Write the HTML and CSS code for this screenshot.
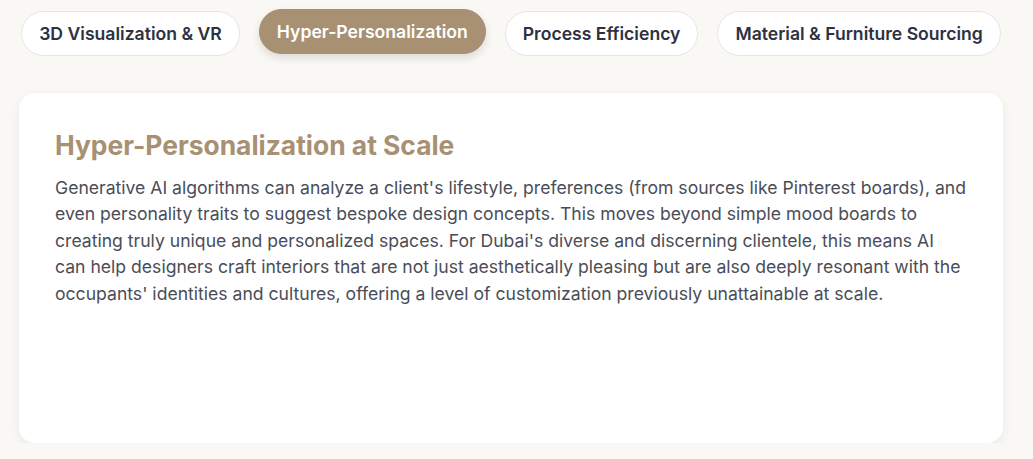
FILE: index.html
```html
<!DOCTYPE html>
<html lang="en">
<head>
  <meta charset="UTF-8">
  <meta name="viewport" content="width=device-width, initial-scale=1.0">
  <title>AI in Interior Design</title>
  <link rel="stylesheet" href="styles.css">
</head>
<body>

  <div id="wrap">
    <div id="tabs">
      <button class="tab">3D Visualization &amp; VR</button>
      <button class="tab active">Hyper-Personalization</button>
      <button class="tab">Process Efficiency</button>
      <button class="tab">Material &amp; Furniture Sourcing</button>
    </div>

    <div id="panel">
      <h2>Hyper-Personalization at Scale</h2>
      <p>Generative AI algorithms can analyze a client's lifestyle, preferences (from sources like Pinterest boards), and even personality traits to suggest bespoke design concepts. This moves beyond simple mood boards to creating truly unique and personalized spaces. For Dubai's diverse and discerning clientele, this means AI can help designers craft interiors that are not just aesthetically pleasing but are also deeply resonant with the occupants' identities and cultures, offering a level of customization previously unattainable at scale.</p>
    </div>
  </div>

</body>
</html>
```

FILE: styles.css
```css
body {
  font-family: 'Inter', 'Liberation Sans', sans-serif;
  background-color: #f9f8f5;
  margin: 0;
}

#wrap {
  width: 984px;
  margin-left: 19px;
  padding-top: 11px;
}

#tabs {
  display: flex;
  justify-content: center;
  gap: 19px;
}

.tab {
  flex-shrink: 0;
  white-space: nowrap;
  font-family: inherit;
  font-size: 17.6px;
  font-weight: 600;
  color: #2d3142;
  background-color: #fff;
  border: 1px solid #e5e5e8;
  border-radius: 999px;
  padding: 0 17px;
  height: 45px;
  cursor: pointer;
}

.tab.active {
  background-color: #a89073;
  border-color: #a89073;
  color: #fff;
  transform: translateY(-2px);
  box-shadow: 0 4px 8px rgba(0, 0, 0, 0.12);
}

#panel {
  margin-top: 37px;
  background-color: #fff;
  border-radius: 16px;
  box-shadow: 0 4px 12px rgba(0, 0, 0, 0.06);
  padding: 36px;
  height: 350px;
  box-sizing: border-box;
}

#panel h2 {
  margin: 0 0 14px;
  font-size: 26.4px;
  font-weight: 700;
  color: #a89073;
}

#panel p {
  margin: 0;
  font-size: 17.6px;
  line-height: 1.5;
  color: #4a4d57;
}
```
